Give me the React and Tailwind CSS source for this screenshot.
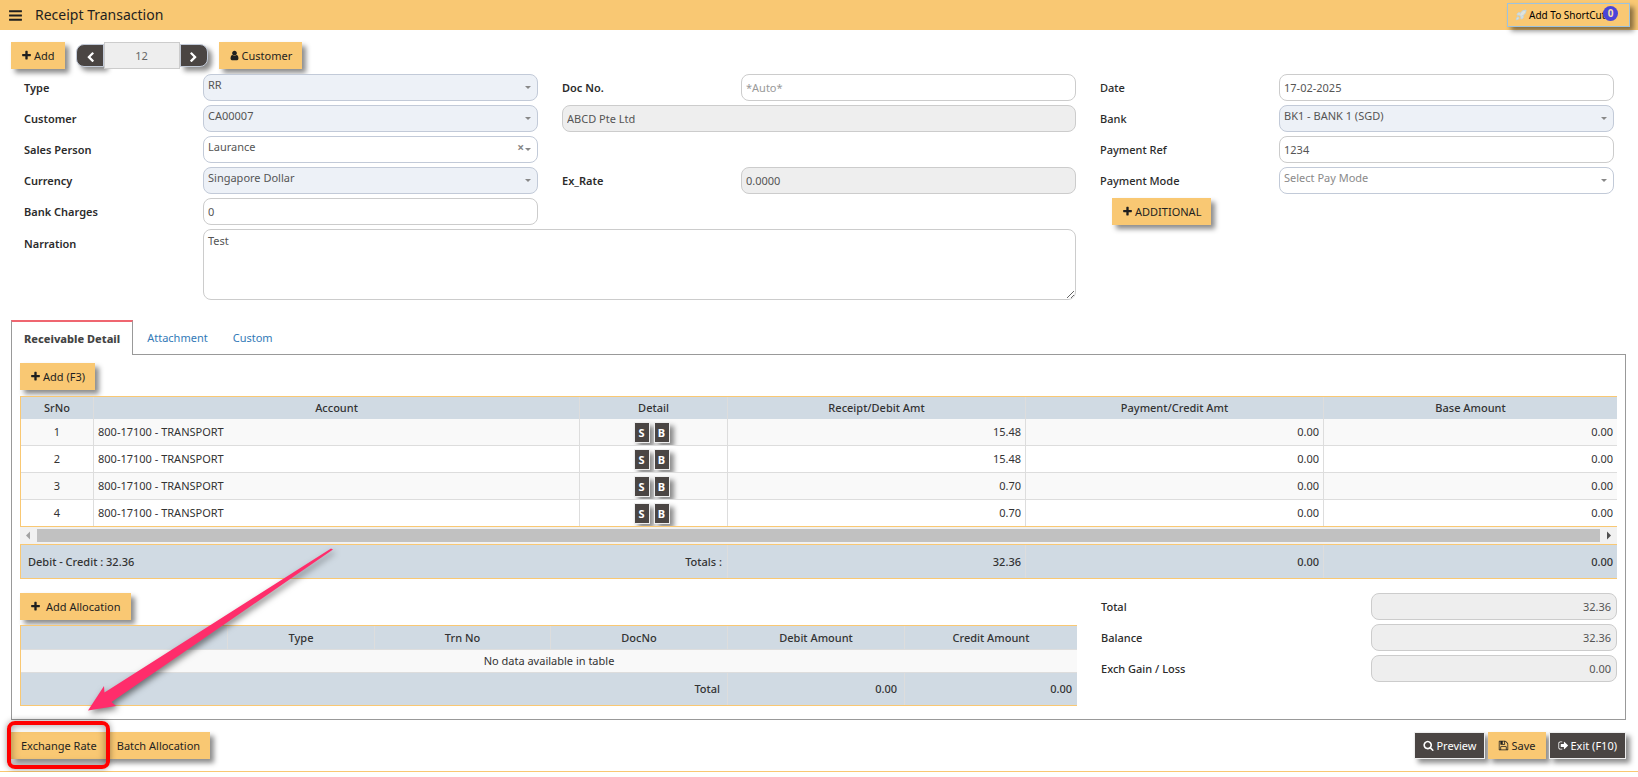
import React from "react";
import { Rocket } from "lucide-react";

const PATHS = {
  bars: "M1664 1344v128q0 26-19 45t-45 19h-1408q-26 0-45-19t-19-45v-128q0-26 19-45t45-19h1408q26 0 45 19t19 45zm0-512v128q0 26-19 45t-45 19h-1408q-26 0-45-19t-19-45v-128q0-26 19-45t45-19h1408q26 0 45 19t19 45zm0-512v128q0 26-19 45t-45 19h-1408q-26 0-45-19t-19-45v-128q0-26 19-45t45-19h1408q26 0 45 19t19 45z",
  plus: "M1600 736v192q0 40-28 68t-68 28h-416v416q0 40-28 68t-68 28h-192q-40 0-68-28t-28-68v-416h-416q-40 0-68-28t-28-68v-192q0-40 28-68t68-28h416v-416q0-40 28-68t68-28h192q40 0 68 28t28 68v416h416q40 0 68 28t28 68z",
  user: "M1536 1399q0 109-62.5 187t-150.5 78h-854q-88 0-150.5-78t-62.5-187q0-85 8.5-160.5t31.5-152 58.5-131 94-89 134.5-34.5q131 128 313 128t313-128q76 0 134.5 34.5t94 89 58.5 131 31.5 152 8.5 160.5zm-256-887q0 159-112.5 271.5t-271.5 112.5-271.5-112.5-112.5-271.5 112.5-271.5 271.5-112.5 271.5 112.5 112.5 271.5z",
  search: "M1216 832q0-185-131.5-316.5t-316.5-131.5-316.5 131.5-131.5 316.5 131.5 316.5 316.5 131.5 316.5-131.5 131.5-316.5zm512 832q0 52-38 90t-90 38q-54 0-90-38l-343-342q-179 124-399 124-143 0-273.5-55.5t-225-150-150-225-55.5-273.5 55.5-273.5 150-225 225-150 273.5-55.5 273.5 55.5 225 150 150 225 55.5 273.5q0 220-124 399l343 343q37 37 37 90z",
  left: "M1427 301l-531 531 531 531q19 19 19 45t-19 45l-166 166q-19 19-45 19t-45-19l-742-742q-19-19-19-45t19-45l742-742q19-19 45-19t45 19l166 166q19 19 19 45t-19 45z",
  right: "M1363 877l-742 742q-19 19-45 19t-45-19l-166-166q-19-19-19-45t19-45l531-531-531-531q-19-19-19-45t19-45l166-166q19-19 45-19t45 19l742 742q19 19 19 45t-19 45z",
  save: "M512 1536h768v-384h-768v384zm896 0h128v-896q0-14-10-38.5t-20-34.5l-281-281q-10-10-34-20t-39-10v416q0 40-28 68t-68 28h-576q-40 0-68-28t-28-68v-416h-128v1280h128v-416q0-40 28-68t68-28h832q40 0 68 28t28 68v416zm-384-928v-320q0-13-9.5-22.5t-22.5-9.5h-192q-13 0-22.5 9.5t-9.5 22.5v320q0 13 9.5 22.5t22.5 9.5h192q13 0 22.5-9.5t9.5-22.5zm640 32v928q0 40-28 68t-68 28h-1344q-40 0-68-28t-28-68v-1344q0-40 28-68t68-28h928q40 0 88 20t76 48l280 280q28 28 48 76t20 88z",
  exit: "M704 1440q0 4 1 20t.5 26.5-3 23.5-10 19.5-20.5 6.5h-320q-119 0-203.5-84.5t-84.5-203.5v-704q0-119 84.5-203.5t203.5-84.5h320q13 0 22.5 9.5t9.5 22.5q0 4 1 20t.5 26.5-3 23.5-10 19.5-20.5 6.5h-320q-66 0-113 47t-47 113v704q0 66 47 113t113 47h312l11.5 1 11.5 3 8 5.500 7 9 2 13.500zm928-544q0 26-19 45l-544 544q-19 19-45 19t-45-19-19-45v-288h-448q-26 0-45-19t-19-45v-384q0-26 19-45t45-19h448v-288q0-26 19-45t45-19 45 19l544 544q19 19 19 45z",
};

function Icon({ name, className = "size-3" }) {
  return (
    <svg viewBox="0 0 1792 1792" fill="currentColor" aria-hidden="true" className={`shrink-0 ${className}`}>
      <path d={PATHS[name]} />
    </svg>
  );
}

function Button({ icon, tone = "amber", gap = "gap-[2px]", className = "", children }) {
  const tones = {
    amber: "bg-[#f9c873] text-[#1f1f1f] px-[10px]",
    dark: "bg-[#4a4543] text-white border border-[#eeeeee] px-2",
  };
  return (
    <button
      type="button"
      className={`flex h-[27px] shrink-0 items-center whitespace-nowrap shadow-[4px_4px_5px_rgba(0,0,0,0.45)] ${gap} ${tones[tone]} ${className}`}
    >
      {icon && <Icon name={icon} className="size-[11px]" />}
      {children}
    </button>
  );
}

const FIELD = "h-[27px] w-full min-w-0 rounded-lg border px-1 outline-none placeholder:text-[#999]";

function Row({ id, label, bold, tall, className = "", children }) {
  return (
    <div className={`flex ${tall ? "items-start" : "items-center"} ${className}`}>
      <label
        htmlFor={id}
        className={`w-[179px] shrink-0 text-[#2b2b2b] ${bold ? "font-semibold" : "font-medium"} ${tall ? "pt-[7px]" : ""}`}
      >
        {label}
      </label>
      <div className="relative min-w-0 flex-1">{children}</div>
    </div>
  );
}

function Input({ id, readOnly, className = "", ...rest }) {
  return (
    <input
      id={id}
      type="text"
      readOnly={readOnly}
      className={`${FIELD} border-[#cccccc] text-[#555] ${readOnly ? "bg-[#eeeeee]" : "bg-white"} ${className}`}
      {...rest}
    />
  );
}

function Select({ id, value, locked, muted, clearable }) {
  return (
    <>
      <select
        id={id}
        defaultValue={value}
        className={`${FIELD} appearance-none border-[#c2cad8] pb-1.5 ${locked ? "bg-[#edf1f7]" : "bg-white"} ${muted ? "text-[#8a8a8a]" : "text-[#555]"}`}
      >
        <option>{value}</option>
      </select>
      {clearable && (
        <button
          type="button"
          aria-label="Clear"
          className="absolute top-1.5 right-3.5 h-3 text-[12px] leading-3 font-bold text-[#888]"
        >
          ×
        </button>
      )}
      <svg viewBox="0 0 6 3" aria-hidden="true" className="pointer-events-none absolute top-3 right-[7px] h-[3px] w-1.5">
        <path d="M0 0h6L3 3z" fill="#888" />
      </svg>
    </>
  );
}

const LINES = [
  ["1", "800-17100 - TRANSPORT", "15.48", "0.00", "0.00"],
  ["2", "800-17100 - TRANSPORT", "15.48", "0.00", "0.00"],
  ["3", "800-17100 - TRANSPORT", "0.70", "0.00", "0.00"],
  ["4", "800-17100 - TRANSPORT", "0.70", "0.00", "0.00"],
];

function LineColumns() {
  return (
    <colgroup>
      <col className="w-[73px]" />
      <col />
      <col className="w-[148px]" />
      <col className="w-[298px]" />
      <col className="w-[298px]" />
      <col className="w-[293px]" />
    </colgroup>
  );
}

function DetailButton({ children }) {
  return (
    <button
      type="button"
      className="h-[21px] w-4 border border-[#eeeeee] bg-[#4a4543] text-center leading-4 font-bold text-white shadow-[4px_4px_5px_rgba(0,0,0,0.45)]"
    >
      {children}
    </button>
  );
}

function ReceivableTable() {
  const head = "border-r border-[#dddddd] font-medium last:border-r-0";
  return (
    <div>
      <table className="w-full table-fixed border-separate border-spacing-0 border-y border-l border-[#f9c873] text-[#333]">
        <LineColumns />
        <thead>
          <tr className="h-[22px] bg-[#d0dae3]">
            {["SrNo", "Account", "Detail", "Receipt/Debit Amt", "Payment/Credit Amt", "Base Amount"].map((h) => (
              <th key={h} className={head}>{h}</th>
            ))}
          </tr>
        </thead>
        <tbody className="[&>tr:last-child>td]:border-b-0">
          {LINES.map(([no, account, debit, credit, base]) => (
            <tr key={no} className="h-[27px] last:h-[26px] odd:bg-[#f9f9f9] [&>td]:border-b [&>td]:border-[#dddddd]">
              <td className="border-r text-center">{no}</td>
              <td className="border-r px-1">{account}</td>
              <td className="overflow-hidden border-r">
                <div className="flex h-[26px] items-center justify-center gap-1 overflow-hidden pt-px pr-1">
                  <DetailButton>S</DetailButton>
                  <DetailButton>B</DetailButton>
                </div>
              </td>
              <td className="border-r px-1 text-right">{debit}</td>
              <td className="border-r px-1 text-right">{credit}</td>
              <td className="px-1 text-right">{base}</td>
            </tr>
          ))}
        </tbody>
      </table>
      <div className="flex h-[17px] items-center bg-[#f1f1f1]" aria-hidden="true">
        <svg viewBox="0 0 17 17" className="size-[17px]">
          <path d="M10 4.500v8L6 8.500z" fill="#a3a3a3" />
        </svg>
        <div className="h-[13px] flex-1 bg-[#c1c1c1]" />
        <svg viewBox="0 0 17 17" className="size-[17px]">
          <path d="M7 4.500v8l4-4z" fill="#505050" />
        </svg>
      </div>
      <table className="w-full table-fixed border-separate border-spacing-0 border-y border-l border-[#f9c873] text-[#333]">
        <LineColumns />
        <tbody>
          <tr className="h-[33px] bg-[#d0dae3] font-medium">
            <td colSpan={2} className="px-[7px]">Debit - Credit : 32.36</td>
            <td className="border-r border-[#dddddd] px-[5px] text-right">Totals :</td>
            <td className="border-r border-[#dddddd] px-1 text-right">32.36</td>
            <td className="border-r border-[#dddddd] px-1 text-right">0.00</td>
            <td className="px-1 text-right">0.00</td>
          </tr>
        </tbody>
      </table>
    </div>
  );
}

function AllocationTable() {
  return (
    <table className="mt-[5px] w-full table-fixed border-separate border-spacing-0 border-y border-l border-[#f9c873] text-[#333]">
      <colgroup>
        <col />
        <col className="w-[147px]" />
        <col className="w-[176px]" />
        <col className="w-[177px]" />
        <col className="w-[177px]" />
        <col className="w-[172px]" />
      </colgroup>
      <thead>
        <tr className="h-[24px] bg-[#d0dae3]">
          {["", "Type", "Trn No", "DocNo", "Debit Amount", "Credit Amount"].map((h) => (
            <th key={h} className="border-r border-b border-[#dddddd] font-medium last:border-r-0">{h}</th>
          ))}
        </tr>
      </thead>
      <tbody>
        <tr className="h-[23px] bg-[#f9f9f9]">
          <td colSpan={6} className="border-b border-[#dddddd] text-center">No data available in table</td>
        </tr>
      </tbody>
      <tfoot>
        <tr className="h-[32px] bg-[#d0dae3] font-medium">
          <td colSpan={4} className="border-r border-[#dddddd] px-[7px] text-right">Total</td>
          <td className="border-r border-[#dddddd] px-[7px] text-right">0.00</td>
          <td className="px-[5px] text-right">0.00</td>
        </tr>
      </tfoot>
    </table>
  );
}

function SummaryRow({ id, label, value }) {
  return (
    <div className="flex items-center justify-between">
      <label htmlFor={id} className="font-medium text-[#2b2b2b]">{label}</label>
      <input
        id={id}
        readOnly
        defaultValue={value}
        className="h-[27px] w-[246px] rounded-lg border border-[#cccccc] bg-[#eeeeee] px-[5px] text-right text-[#555] outline-none"
      />
    </div>
  );
}

function Callout() {
  return (
    <>
      <div className="pointer-events-none absolute top-[721px] left-[7px] h-[48px] w-[103px] rounded-lg border-4 border-[#ff0000] shadow-[0_0_6px_rgba(0,0,0,0.4),inset_0_0_8px_rgba(0,0,0,0.4)]" />
      <svg
        viewBox="80 540 270 180"
        aria-hidden="true"
        className="pointer-events-none absolute top-[540px] left-[80px] h-[180px] w-[270px] overflow-visible drop-shadow-[2px_3px_3px_rgba(0,0,0,0.5)]"
      >
        <path d="M88 710.500L104 686l.5 6.500L331 548.500l2 1L111.500 702l4.500 4z" fill="#ff2d6b" />
      </svg>
    </>
  );
}

export default function App() {
  return (
    <div className="relative bg-white font-['Noto_Sans','Open_Sans',sans-serif] text-[11px] leading-4 text-[#333]">
      <header className="flex h-[30px] items-center bg-[#f9c873] pr-2 pl-2 text-[#1f1f1f]">
        <button type="button" aria-label="Menu" className="flex">
          <Icon name="bars" className="size-[15px]" />
        </button>
        <h1 className="ml-3 pb-px text-[14px]">Receipt Transaction</h1>
        <button
          type="button"
          className="relative ml-auto flex h-6 w-[123px] items-center gap-[2px] border border-[#9cc3e0] pl-[7px] text-[10px] whitespace-nowrap text-black shadow-[4px_4px_5px_rgba(0,0,0,0.45)]"
        >
          <Rocket aria-hidden="true" className="size-3 shrink-0 fill-[#dfe3dc] text-[#bfd6e4]" strokeWidth={2} />
          Add To ShortCut
          <span className="absolute top-0.5 right-[11px] size-[15px] rounded-full bg-[#4b44d8] text-center text-[10px] leading-[15px] font-bold text-[#f9dfae]">
            0
          </span>
        </button>
      </header>

      <main>
        <div className="flex items-center px-[11px] pt-3">
          <Button icon="plus">Add</Button>
          <div className="ml-[11px] flex items-center">
            <button type="button" aria-label="Previous" className="flex h-[23px] w-7 items-center justify-center rounded-l-lg border border-[#c2cad8] bg-[#4a4543] pt-1 pl-0.5 text-white shadow-[4px_4px_5px_rgba(0,0,0,0.45)]">
              <Icon name="left" className="size-[11px]" />
            </button>
            <input
              aria-label="Transaction number"
              readOnly
              defaultValue="12"
              className="relative h-[27px] w-[76px] border border-[#cccccc] bg-[#eeeeee] text-center text-[#666] outline-none"
            />
            <button type="button" aria-label="Next" className="flex h-[23px] w-7 items-center justify-center rounded-r-lg border border-[#c2cad8] bg-[#4a4543] pt-1 text-white shadow-[4px_4px_5px_rgba(0,0,0,0.45)]">
              <Icon name="right" className="size-[11px]" />
            </button>
          </div>
          <Button icon="user" className="ml-[11px]">Customer</Button>
        </div>

        <form className="mt-[5px] grid grid-cols-3 gap-x-6 gap-y-1 px-6">
          <Row id="type" label="Type" bold><Select id="type" value="RR" locked /></Row>
          <Row id="doc" label="Doc No." bold><Input id="doc" placeholder="*Auto*" /></Row>
          <Row id="date" label="Date"><Input id="date" defaultValue="17-02-2025" /></Row>

          <Row id="customer" label="Customer" bold><Select id="customer" value="CA00007" locked /></Row>
          <Input aria-label="Customer name" readOnly defaultValue="ABCD Pte Ltd" />
          <Row id="bank" label="Bank"><Select id="bank" value="BK1 - BANK 1 (SGD)" locked /></Row>

          <Row id="sales" label="Sales Person" bold><Select id="sales" value="Laurance" clearable /></Row>
          <Row id="ref" label="Payment Ref" className="col-start-3"><Input id="ref" defaultValue="1234" /></Row>

          <Row id="currency" label="Currency" bold><Select id="currency" value="Singapore Dollar" locked /></Row>
          <Row id="rate" label="Ex_Rate" bold><Input id="rate" readOnly defaultValue="0.0000" /></Row>
          <Row id="mode" label="Payment Mode"><Select id="mode" value="Select Pay Mode" muted /></Row>

          <Row id="charges" label="Bank Charges" bold><Input id="charges" defaultValue="0" /></Row>
          <div className="col-start-3 pl-3"><Button icon="plus">ADDITIONAL</Button></div>

          <Row id="narration" label="Narration" bold tall className="col-span-2">
            <textarea
              id="narration"
              defaultValue="Test"
              className="block h-[71px] w-full resize rounded-lg border border-[#cccccc] px-1 py-[3px] text-[#555] outline-none"
            />
          </Row>
        </form>

        <section className="mt-5 mr-3 ml-[11px]">
          <div role="tablist" className="flex h-[35px]">
            <button type="button" role="tab" aria-selected="true" className="border-x border-t-2 border-x-[#999] border-t-[#ef6670] px-3 font-extrabold whitespace-nowrap text-[#444]">
              Receivable Detail
            </button>
            <div className="flex flex-1 gap-[25px] border-b border-[#999] pt-0.5 pl-[14px] text-[#337ab7]">
              <button type="button" role="tab" aria-selected="false">Attachment</button>
              <button type="button" role="tab" aria-selected="false">Custom</button>
            </div>
          </div>

          <div className="border-x border-b border-[#999] pt-2 pr-2 pb-[13px] pl-2">
            <Button icon="plus">Add (F3)</Button>
            <div className="mt-[6px]"><ReceivableTable /></div>
            <div className="mt-[14px] flex gap-6">
              <div className="min-w-0 flex-1">
                <Button icon="plus" gap="gap-[5px]">Add Allocation</Button>
                <AllocationTable />
              </div>
              <div className="flex w-[516px] flex-col gap-1">
                <SummaryRow id="total" label="Total" value="32.36" />
                <SummaryRow id="balance" label="Balance" value="32.36" />
                <SummaryRow id="gain" label="Exch Gain / Loss" value="0.00" />
              </div>
            </div>
          </div>
        </section>

        <footer className="flex items-center border-b border-[#f9c873] pt-3 pr-3 pb-3 pl-[11px]">
          <Button>Exchange Rate</Button>
          <Button>Batch Allocation</Button>
          <div className="ml-auto flex gap-[3px]">
            <Button icon="search" tone="dark">Preview</Button>
            <Button icon="save">Save</Button>
            <Button icon="exit" tone="dark">Exit (F10)</Button>
          </div>
        </footer>
      </main>

      <Callout />
    </div>
  );
}
